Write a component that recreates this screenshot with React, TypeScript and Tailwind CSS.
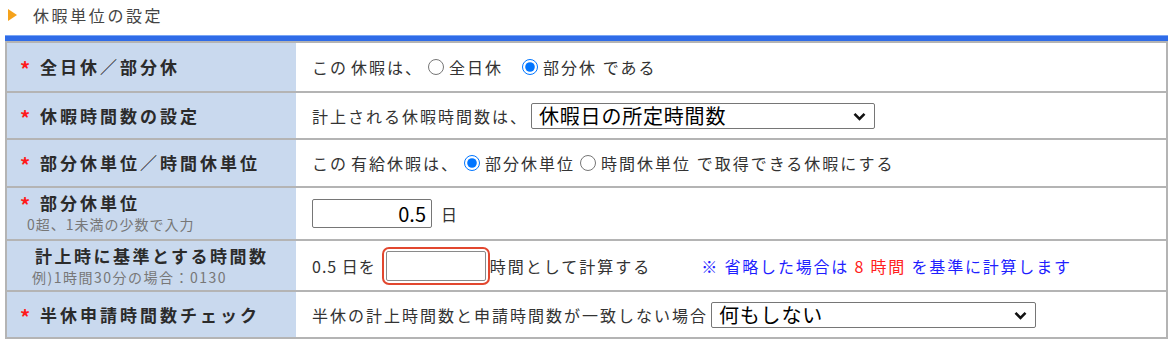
import React from "react"

function Row({ h, label, children }: { h: string; label: React.ReactNode; children: React.ReactNode }) {
  return (
    <div className={`flex border-t-2 border-[#b4b4b4] ${h}`}>
      <div className="w-[289px] shrink-0 bg-[#c9d9ee] flex flex-col justify-center">{label}</div>
      <div className="flex-1 flex items-center pl-[16px] text-[16px] tracking-[2px] text-[#333]">{children}</div>
    </div>
  )
}

function Req({ text }: { text: string }) {
  return (
    <div className="flex items-center pl-[13px]">
      <span className="w-[20px] text-[#ff1a1a] text-[20px] font-bold leading-none pt-[4px]">*</span>
      <span className="text-[17px] font-bold tracking-[3px] text-[#2b2b2b]">{text}</span>
    </div>
  )
}

function Select({ value, w }: { value: string; w: string }) {
  return (
    <span className={`relative inline-flex items-center h-[26px] border border-[#767676] rounded-[2px] bg-white ${w}`}>
      <span className="pl-[7px] text-[20px] tracking-[0.8px] text-black leading-none">{value}</span>
      <svg className="absolute right-[8px] top-[8px]" width="13" height="9" viewBox="0 0 13 9">
        <path d="M1.5 1.8 L6.5 6.8 L11.5 1.8" fill="none" stroke="#111" strokeWidth="2.6" />
      </svg>
    </span>
  )
}

function Radio({ checked }: { checked?: boolean }) {
  return (
    <input type="radio" readOnly checked={!!checked} className="w-[16px] h-[16px] mx-[5px] accent-[#0075ff]" />
  )
}

export default function App() {
  return (
    <div className="w-[1175px] h-[344px] bg-white font-['Meiryo','Noto_Sans_CJK_JP',sans-serif]">
      <div className="h-[30px] flex items-center pl-[8px]">
        <svg width="9" height="12" viewBox="0 0 9 12">
          <path d="M0 0 L9 6 L0 12 Z" fill="#f5a21b" />
        </svg>
        <span className="ml-[16px] text-[16px] tracking-[2.6px] text-[#444]">休暇単位の設定</span>
      </div>
      <div className="ml-[5px] mt-[5px] w-[1163px]">
        <div className="h-[6px] bg-[#2f6ce8] border-t border-[#7aa6f5]" />
        <div className="border-x-2 border-b-2 border-[#b4b4b4]">
          <Row h="h-[50px]" label={<Req text="全日休／部分休" />}>
            <span>この</span>
            <span className="ml-[3px]">休暇は、</span>
            <Radio />
            <span>全日休</span>
            <span className="ml-[14px]" />
            <Radio checked />
            <span>部分休 である</span>
          </Row>
          <Row h="h-[47px]" label={<Req text="休暇時間数の設定" />}>
            <span className="mr-[3px]">計上される休暇時間数は、</span>
            <Select value="休暇日の所定時間数" w="w-[344px]" />
          </Row>
          <Row h="h-[48px]" label={<Req text="部分休単位／時間休単位" />}>
            <span>この</span>
            <span className="ml-[3px]">有給休暇は、</span>
            <Radio checked />
            <span>部分休単位</span>
            <Radio />
            <span>時間休単位 で取得できる休暇にする</span>
          </Row>
          <Row
            h="h-[53px]"
            label={
              <div className="-mt-[4px]">
                <Req text="部分休単位" />
                <div className="pl-[20px] text-[14px] tracking-[1px] text-[#777] leading-[17px]">0超、1未満の少数で入力</div>
              </div>
            }
          >
            <input
              readOnly
              value="0.5"
              className="w-[120px] h-[29px] border border-[#767676] rounded-[2px] text-right pr-[5px] text-[20px] text-black tracking-normal"
            />
            <span className="ml-[9px]">日</span>
          </Row>
          <Row
            h="h-[51px]"
            label={
              <div className="-mt-[2px]">
                <div className="pl-[28px] text-[17px] font-bold tracking-[2.5px] text-[#2b2b2b] leading-[24px]">計上時に基準とする時間数</div>
                <div className="pl-[25px] text-[14px] tracking-[1.5px] text-[#777] leading-[18px]">例)1時間30分の場合：0130</div>
              </div>
            }
          >
            <span className="tracking-[1px]">0.5 日を</span>
            <span className="ml-[6px] inline-flex p-[2px] border-2 border-[#e2472f] rounded-[7px]">
              <span className="block w-[100px] h-[30px] border border-[#8a8a8a] rounded-[2px]" />
            </span>
            <span>時間として計算する</span>
            <span className="ml-[50px] text-[#1f1fff] tracking-[1.8px]">
              ※ 省略した場合は <span className="text-[#ff2020]">8 時間</span> を基準に計算します
            </span>
          </Row>
          <Row h="h-[47px]" label={<Req text="半休申請時間数チェック" />}>
            <span className="mr-[3px]">半休の計上時間数と申請時間数が一致しない場合</span>
            <Select value="何もしない" w="w-[325px]" />
          </Row>
        </div>
      </div>
    </div>
  )
}
